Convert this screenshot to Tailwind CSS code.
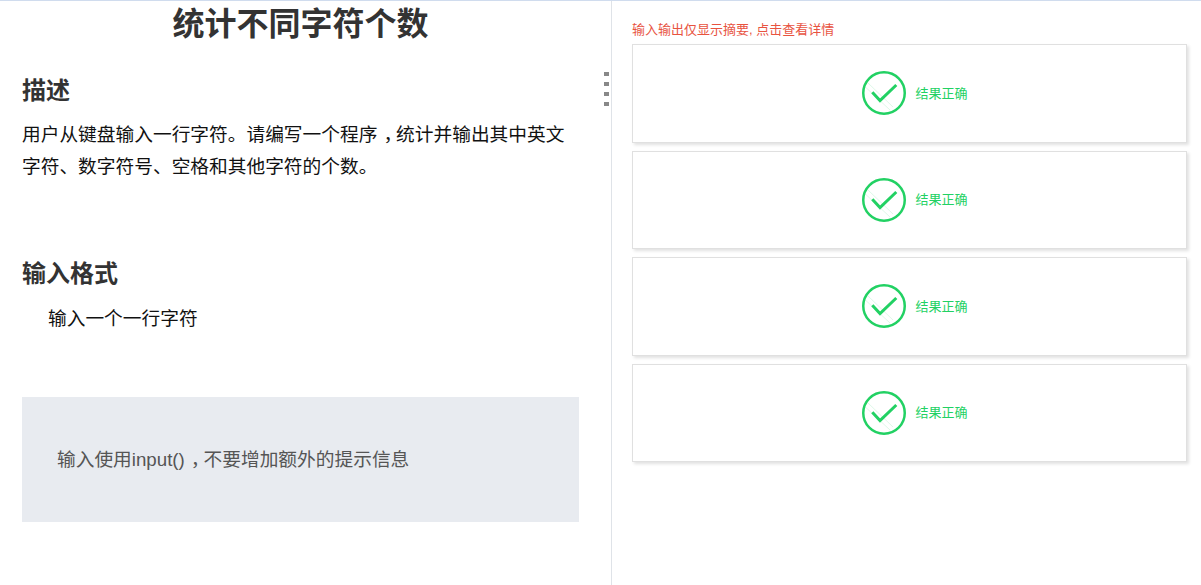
<!DOCTYPE html>
<html lang="zh-CN">
<head>
  <meta charset="UTF-8">
  <title>统计不同字符个数</title>
  <script src="https://cdn.jsdelivr.net/npm/@tailwindcss/browser@4"></script>
</head>
<body class="bg-white font-['Liberation_Sans','Noto_Sans_CJK_SC',sans-serif] overflow-hidden">
  <div class="flex h-[585px] border-t border-[#d0dcee]">
    <!-- problem description -->
    <div class="relative w-[612px] shrink-0 border-r border-[#dfe3e8] px-[22px]">
      <h1 class="w-[557px] pt-[2px] text-center text-[32px] leading-[42px] font-bold text-[#333]">统计不同字符个数</h1>
      <h2 class="mt-[24px] text-[24px] leading-[44px] font-bold text-[#333]">描述</h2>
      <p class="mt-[6px] w-[557px] text-[18.72px] leading-[32px] text-[#111]">用户从键盘输入一行字符。请编写一个程序<span class="pl-[6px] tracking-[-6px]">，</span>统计并输出其中英文<br>字符、数字符号、空格和其他字符的个数。</p>
      <h2 class="mt-[69px] text-[24px] leading-[44px] font-bold text-[#333]">输入格式</h2>
      <p class="mt-[7px] pl-[26px] text-[18.72px] leading-[32px] text-[#111]">输入一个一行字符</p>
      <div class="mt-[62px] flex h-[125px] w-[557px] items-center bg-[#e8ebf0] px-[35px]">
        <p class="text-[18.72px] leading-[32px] text-[#555]">输入使用input()<span class="pl-[6px] tracking-[-6px]">，</span>不要增加额外的提示信息</p>
      </div>
      <!-- drag handle -->
      <div class="absolute left-[604px] top-[71px] flex flex-col gap-[6px]">
        <span class="h-[4px] w-[5px] bg-[#888]"></span>
        <span class="h-[4px] w-[5px] bg-[#888]"></span>
        <span class="h-[4px] w-[5px] bg-[#888]"></span>
        <span class="h-[4px] w-[5px] bg-[#888]"></span>
      </div>
    </div>

    <!-- results -->
    <div class="w-[555px] ml-[20px] pt-[20px]">
      <p class="text-[13px] leading-[17px] text-[#e8533f]">输入输出仅显示摘要, 点击查看详情</p>
      <div class="mt-[6px] flex flex-col gap-[8px]">
        <div class="flex h-[98.5px] items-center justify-center gap-[10px] border border-[#e0e0e0] bg-white pl-[10px] shadow-[2px_2px_3px_rgba(0,0,0,0.12)]">
          <svg class="size-[44px]" viewBox="0 0 44 44" fill="none"><circle cx="22" cy="22" r="20.750" stroke="#22d163" stroke-width="2.500"/><path d="M3 15.700 28 39M6 12 31 36" stroke="#22d163" stroke-opacity=".15" stroke-width="1"/><path d="M10.300 21.300 18 29.500 34.300 14" stroke="#22d163" stroke-width="3"/></svg>
          <span class="w-[52px] text-[13px] leading-[17px] whitespace-nowrap text-[#22d163]">结果正确</span>
        </div>
        <div class="flex h-[98.5px] items-center justify-center gap-[10px] border border-[#e0e0e0] bg-white pl-[10px] shadow-[2px_2px_3px_rgba(0,0,0,0.12)]">
          <svg class="size-[44px]" viewBox="0 0 44 44" fill="none"><circle cx="22" cy="22" r="20.750" stroke="#22d163" stroke-width="2.500"/><path d="M3 15.700 28 39M6 12 31 36" stroke="#22d163" stroke-opacity=".15" stroke-width="1"/><path d="M10.300 21.300 18 29.500 34.300 14" stroke="#22d163" stroke-width="3"/></svg>
          <span class="w-[52px] text-[13px] leading-[17px] whitespace-nowrap text-[#22d163]">结果正确</span>
        </div>
        <div class="flex h-[98.5px] items-center justify-center gap-[10px] border border-[#e0e0e0] bg-white pl-[10px] shadow-[2px_2px_3px_rgba(0,0,0,0.12)]">
          <svg class="size-[44px]" viewBox="0 0 44 44" fill="none"><circle cx="22" cy="22" r="20.750" stroke="#22d163" stroke-width="2.500"/><path d="M3 15.700 28 39M6 12 31 36" stroke="#22d163" stroke-opacity=".15" stroke-width="1"/><path d="M10.300 21.300 18 29.500 34.300 14" stroke="#22d163" stroke-width="3"/></svg>
          <span class="w-[52px] text-[13px] leading-[17px] whitespace-nowrap text-[#22d163]">结果正确</span>
        </div>
        <div class="flex h-[98.5px] items-center justify-center gap-[10px] border border-[#e0e0e0] bg-white pl-[10px] shadow-[2px_2px_3px_rgba(0,0,0,0.12)]">
          <svg class="size-[44px]" viewBox="0 0 44 44" fill="none"><circle cx="22" cy="22" r="20.750" stroke="#22d163" stroke-width="2.500"/><path d="M3 15.700 28 39M6 12 31 36" stroke="#22d163" stroke-opacity=".15" stroke-width="1"/><path d="M10.300 21.300 18 29.500 34.300 14" stroke="#22d163" stroke-width="3"/></svg>
          <span class="w-[52px] text-[13px] leading-[17px] whitespace-nowrap text-[#22d163]">结果正确</span>
        </div>
      </div>
    </div>
  </div>
</body>
</html>
